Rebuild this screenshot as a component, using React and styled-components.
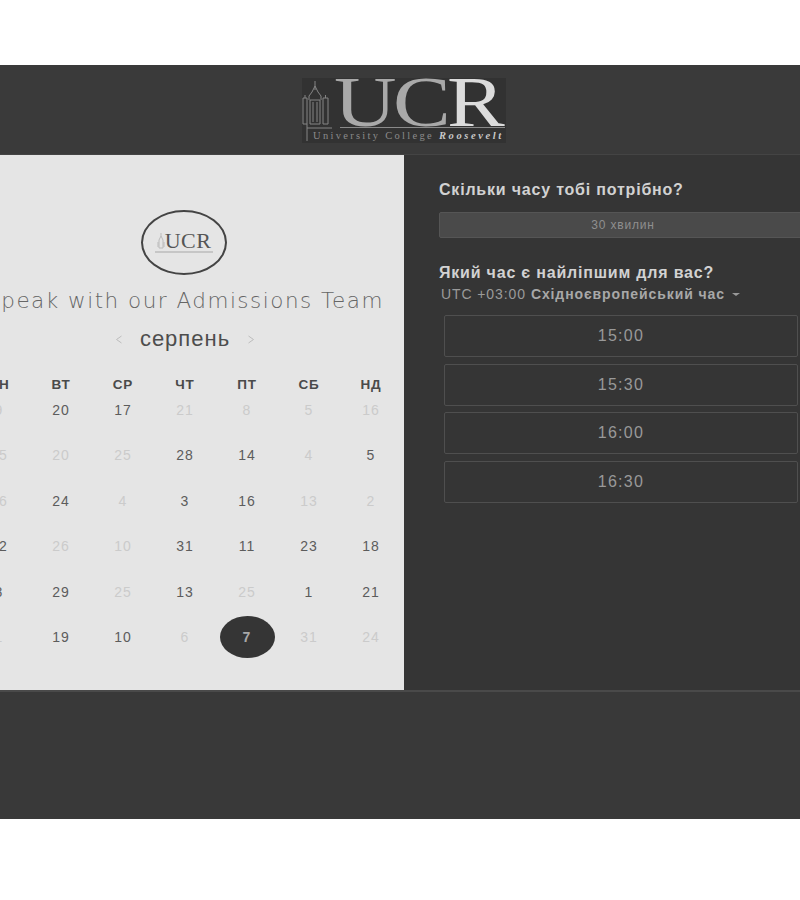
import React from 'react'
import styled, { createGlobalStyle } from 'styled-components'

const Global = createGlobalStyle`
  html, body {
    margin: 0;
    background: #fff;
    overflow: hidden;
  }
  body {
    font-family: "Liberation Sans", Arial, sans-serif;
  }
`

const Page = styled.div`
  width: 800px;
  height: 900px;
  padding-top: 65px;
  box-sizing: border-box;
  overflow: hidden;
`

const Frame = styled.div`
  height: 754px;
  background: #393939;
  display: flex;
  flex-direction: column;
`

const Header = styled.header`
  height: 90px;
  flex-shrink: 0;
  background: #3a3a3a;
  border-bottom: 1px solid #444;
  display: flex;
  justify-content: center;
  align-items: flex-start;
  padding: 13px 0 0 8px;
  box-sizing: border-box;
`

const Logo = styled.div`
  width: 204px;
  height: 65px;
  background: #323232;
  position: relative;
  display: flex;
  flex-direction: column;
`

const Tower = styled.svg`
  position: absolute;
  left: 0;
  top: 0;
  width: 30px;
  height: 65px;
`

const Wordmark = styled.div`
  font-family: "Liberation Serif", serif;
  font-size: 71px;
  line-height: 48px;
  height: 49px;
  margin-left: 32px;
  letter-spacing: -3px;
  color: #a9a9a9;
  white-space: nowrap;
  transform: scaleX(1.22);
  transform-origin: left center;

  span {
    color: #dcdcdc;
  }
`

const LogoRule = styled.div`
  height: 1px;
  background: #8a8a8a;
  margin-left: 38px;
  width: 165px;
`

const Tagline = styled.div`
  font-family: "Liberation Serif", serif;
  font-size: 10.5px;
  line-height: 12px;
  letter-spacing: 2.3px;
  color: #8b8b8b;
  white-space: nowrap;
  margin: 2px 0 0 11px;

  em {
    font-weight: bold;
    letter-spacing: 2.6px;
    color: #c8c8c8;
  }
`

const Main = styled.main`
  height: 537px;
  flex-shrink: 0;
  display: flex;
  border-bottom: 2px solid #4a4a4a;
  box-sizing: border-box;
`

const LeftPanel = styled.section`
  width: 404px;
  flex-shrink: 0;
  background: #e5e5e5;
  overflow: hidden;
  display: flex;
  justify-content: flex-end;
  padding-right: 2px;
  box-sizing: border-box;
`

const LeftInner = styled.div`
  width: 434px;
  flex-shrink: 0;
  display: flex;
  flex-direction: column;
  align-items: center;
  padding-top: 55px;
`

const Badge = styled.div`
  width: 86px;
  height: 65px;
  margin-right: 2px;
  border: 2px solid #444;
  border-radius: 50%;
  display: flex;
  flex-direction: column;
  align-items: center;
  justify-content: center;
  box-sizing: border-box;
`

const BadgeRow = styled.div`
  display: flex;
  align-items: flex-end;
  gap: 0;
`

const BadgeTower = styled.svg`
  width: 8px;
  height: 17px;
`

const BadgeMark = styled.div`
  font-family: "Liberation Serif", serif;
  font-size: 22px;
  line-height: 17px;
  letter-spacing: 0.4px;
  color: #555;
`

const BadgeRule = styled.div`
  width: 58px;
  height: 2px;
  margin-top: 2px;
  background: #c6c6c6;
`

const Title = styled.h1`
  margin: 11px 0 0;
  font-family: "DejaVu Sans", sans-serif;
  font-weight: 200;
  font-size: 21.5px;
  line-height: 30px;
  letter-spacing: 1.5px;
  color: #666;
  white-space: nowrap;
`

const MonthBar = styled.div`
  margin-top: 8px;
  height: 30px;
  display: flex;
  align-items: center;
  justify-content: center;
  gap: 17px;
`

const MonthName = styled.div`
  font-size: 22px;
  line-height: 30px;
  letter-spacing: 1px;
  color: #4d4d4d;
`

const WeekRow = styled.div`
  margin-top: 17px;
  width: 434px;
  height: 26px;
  display: grid;
  grid-template-columns: repeat(7, 62px);
`

const WeekDay = styled.div`
  display: flex;
  align-items: center;
  justify-content: center;
  font-size: 13.5px;
  font-weight: bold;
  letter-spacing: 0.8px;
  color: #4a4a4a;
`

const Calendar = styled.div`
  margin-top: -9.7px;
  width: 434px;
  display: grid;
  grid-template-columns: repeat(7, 62px);
  grid-auto-rows: 45.4px;
`

const Day = styled.div`
  display: flex;
  align-items: center;
  justify-content: center;
  font-size: 14px;
  letter-spacing: 1px;
  color: ${ ({ $open }) => $open ? '#5c5c5c' : '#cbcbcb' };
`

const Selected = styled.div`
  width: 55px;
  height: 42px;
  border-radius: 50%;
  background: #353535;
  color: #a8a8a8;
  font-weight: bold;
  display: flex;
  align-items: center;
  justify-content: center;
`

const RightPanel = styled.section`
  flex: 1;
  min-width: 0;
  padding: 25px 0 0 35px;
  background: #353535;
  box-sizing: border-box;
  overflow: hidden;
`

const Question = styled.h2`
  margin: 0;
  font-size: 16px;
  line-height: 20px;
  font-weight: bold;
  letter-spacing: 0.8px;
  color: #d2d2d2;
  white-space: nowrap;
`

const Duration = styled.div`
  width: 368px;
  height: 26px;
  margin: 12px 0 25px;
  border: 1px solid #555;
  border-radius: 2px;
  background: #4a4a4a;
  display: flex;
  align-items: center;
  justify-content: center;
  font-size: 12px;
  letter-spacing: 0.8px;
  color: #8f8f8f;
  box-sizing: border-box;
`

const Zone = styled.div`
  margin: 2px 0 12px 2px;
  display: flex;
  align-items: center;
  height: 18px;
  font-size: 14px;
  letter-spacing: 0.9px;
  color: #9a9a9a;
  white-space: nowrap;

  b {
    margin-left: 5px;
    color: #a8a8a8;
  }
`

const Caret = styled.span`
  width: 0;
  height: 0;
  margin-left: 7px;
  border-left: 4px solid transparent;
  border-right: 4px solid transparent;
  border-top: 3px solid #999;
`

const Slots = styled.div`
  margin-left: 5px;
  width: 354px;
  display: flex;
  flex-direction: column;
  gap: 6.5px;
`

const Slot = styled.div`
  height: 42px;
  border: 1px solid #4f4f4f;
  border-radius: 2px;
  display: flex;
  align-items: center;
  justify-content: center;
  font-size: 16px;
  letter-spacing: 1.3px;
  color: #999;
  box-sizing: border-box;
`

const weekDays = ['ПН', 'ВТ', 'СР', 'ЧТ', 'ПТ', 'СБ', 'НД']

const days = [
  [9], [20, 1], [17, 1], [21], [8], [5], [16],
  [25], [20], [25], [28, 1], [14, 1], [4], [5, 1],
  [26], [24, 1], [4], [3, 1], [16, 1], [13], [2],
  [12, 1], [26], [10], [31, 1], [11, 1], [23, 1], [18, 1],
  [8, 1], [29, 1], [25], [13, 1], [25], [1, 1], [21, 1],
  [1], [19, 1], [10, 1], [6], [7, 2], [31], [24],
]

const slots = ['15:00', '15:30', '16:00', '16:30']

const Chevron = ({ flip }) => (
  <svg width="8" height="9" viewBox="0 0 8 9" fill="none" stroke="#bdbdbd" strokeWidth="1">
    <path d={ flip ? 'M1.5 1l5 3.5-5 3.5' : 'M6.5 1l-5 3.5 5 3.5' } />
  </svg>
)

const App = () => (
  <Page>
    <Global />
    <Frame>
      <Header>
        <Logo>
          <Tower viewBox="0 0 30 65" fill="none" stroke="#858585" strokeWidth="1">
            <path d="M13 3v9M13 8l-3 6-3 4v4M13 8l3 6 3 4v4" />
            <path d="M8 22h10v24H8zM11 24v20M15 24v20" />
            <path d="M1 20h4v26H1zM3 20v-3M21 20h5v26h-5zM23.5 20v-3" />
            <path d="M5 46v17M5 50h26" />
          </Tower>
          <Wordmark>UC<span>R</span></Wordmark>
          <LogoRule />
          <Tagline>University College <em>Roosevelt</em></Tagline>
        </Logo>
      </Header>
      <Main>
        <LeftPanel>
          <LeftInner>
            <Badge>
              <BadgeRow>
                <BadgeTower viewBox="0 0 8 17" fill="none" stroke="#bbb" strokeWidth="1">
                  <path d="M4 1v3M4 4L2 8v8h4V8zM1 10v5M7 10v5" />
                </BadgeTower>
                <BadgeMark>UCR</BadgeMark>
              </BadgeRow>
              <BadgeRule />
            </Badge>
            <Title>Speak with our Admissions Team</Title>
            <MonthBar>
              <Chevron />
              <MonthName>серпень</MonthName>
              <Chevron flip />
            </MonthBar>
            <WeekRow>
              { weekDays.map(name => <WeekDay key={ name }>{ name }</WeekDay>) }
            </WeekRow>
            <Calendar>
              {
                days.map(([value, state], index) => (
                  <Day key={ index } $open={ state === 1 }>
                    { state === 2 ? <Selected>{ value }</Selected> : value }
                  </Day>
                ))
              }
            </Calendar>
          </LeftInner>
        </LeftPanel>
        <RightPanel>
          <Question>Скільки часу тобі потрібно?</Question>
          <Duration>30 хвилин</Duration>
          <Question>Який час є найліпшим для вас?</Question>
          <Zone>UTC +03:00<b>Східноєвропейський час</b><Caret /></Zone>
          <Slots>
            { slots.map(time => <Slot key={ time }>{ time }</Slot>) }
          </Slots>
        </RightPanel>
      </Main>
    </Frame>
  </Page>
)

export default App
